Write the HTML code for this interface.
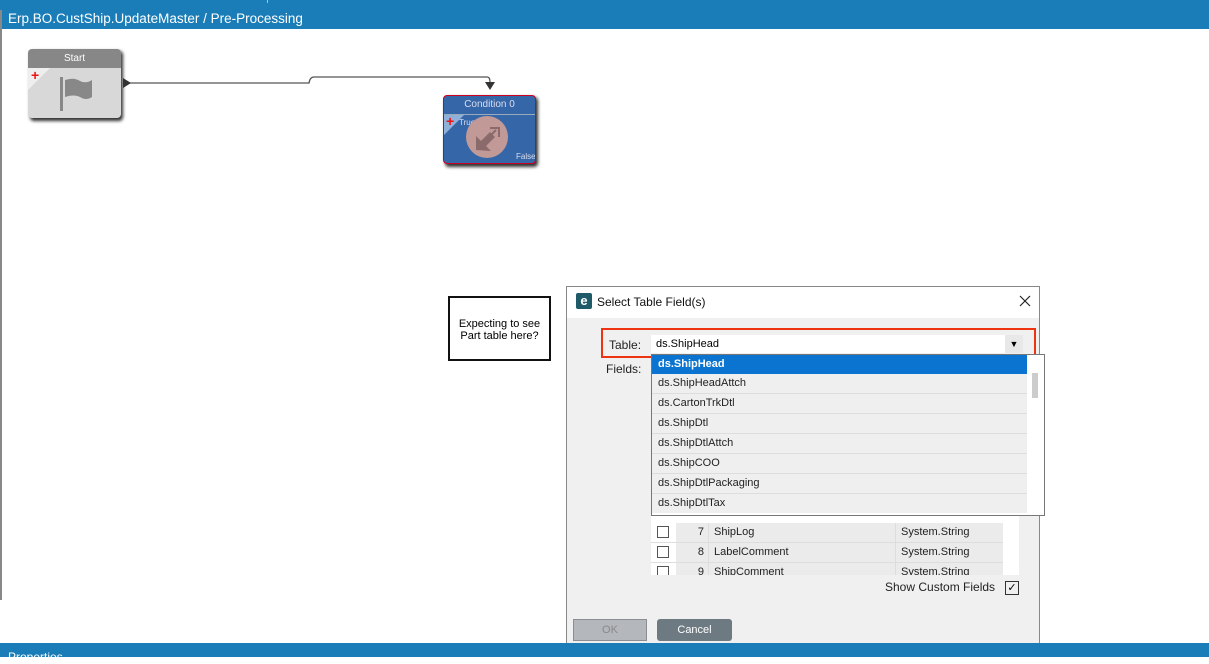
<!DOCTYPE html>
<html><head><style>
body{margin:0;width:1209px;height:657px;overflow:hidden;background:#fff;font-family:"Liberation Sans",sans-serif;position:relative}
.a{position:absolute}
.cb{display:inline-block;width:10px;height:10px;border:1px solid #555;margin:3px 6px}
</style></head><body>
<div class="a" style="left:0;top:0;width:1209px;height:29px;background:#1a7db8"></div>
<div class="a" style="left:267px;top:0;width:1px;height:3px;background:#9cc"></div>
<div class="a" style="left:0;top:10px;width:2px;height:590px;background:#888"></div>
<div class="a" style="left:8px;top:11px;color:#fff;font-size:13.5px">Erp.BO.CustShip.UpdateMaster / Pre-Processing</div>
<!-- Start node -->
<div class="a" style="left:30px;top:51px;width:93px;height:70px;background:#333;border-radius:4px;filter:blur(1.5px)"></div>
<div class="a" style="left:28px;top:49px;width:93px;height:69px;background:#d8d8d8;border-radius:4px;overflow:hidden">
<div style="height:19px;background:#878787;color:#fff;font-size:10px;text-align:center;line-height:19px">Start</div>
<div class="a" style="left:0;top:19px;width:0;height:0;border-top:22px solid #eee;border-right:22px solid transparent"></div>
<div class="a" style="left:3px;top:18px;color:#e11;font-size:14px;font-weight:bold">+</div>
<svg class="a" style="left:28px;top:26px" width="40" height="40"><rect x="4" y="2" width="3" height="34" fill="#888"/><path d="M9 5 Q18 2 24 6 Q30 9 36 5 V22 Q30 26 24 22 Q18 19 9 22Z" fill="#888"/></svg>
</div>
<svg class="a" style="left:120px;top:70px" width="380" height="30"><path d="M5 13 H189 Q190 7 194 7 H367 Q370 7 370 12" fill="none" stroke="#555" stroke-width="1.3"/><path d="M3 8 L11 13 L3 18Z" fill="#333"/><path d="M365 12 H375 L370 20Z" fill="#333"/></svg>
<!-- Condition -->
<div class="a" style="left:445px;top:97px;width:93px;height:70px;background:#333;border-radius:4px;filter:blur(1.5px)"></div>
<div class="a" style="left:443px;top:95px;width:93px;height:69px;background:#3566a8;border:1px solid #c02;border-radius:4px;box-sizing:border-box;overflow:hidden">
<div style="height:18px;border-bottom:1px solid #9ab;color:#dde;font-size:10px;text-align:center;line-height:18px">Condition 0</div>
<div class="a" style="left:0;top:19px;width:0;height:0;border-top:20px solid #8fb0d8;border-right:20px solid transparent"></div>
<div class="a" style="left:2px;top:17px;color:#e11;font-size:14px;font-weight:bold">+</div>
<div class="a" style="left:15px;top:22px;color:#dde;font-size:8px">True</div>
<div class="a" style="left:22px;top:20px;width:42px;height:42px;border-radius:50%;background:#c19a98"></div>
<svg class="a" style="left:24px;top:22px" width="40" height="40"><path d="M8 32 V18 L13 23 L22 14 L27 19 L18 28 L23 33Z" fill="#8a6a6a"/><path d="M20 20 L28 12 M22 10 H31 V19" fill="none" stroke="#8a6a6a" stroke-width="2"/></svg>
<div class="a" style="left:72px;top:56px;color:#dde;font-size:8px">False</div>
</div>
<!-- note -->
<div class="a" style="left:448px;top:296px;font-size:11px;text-align:center;line-height:12px;box-sizing:border-box;padding-top:20px;width:103px;height:65px;border:2px solid #111">Expecting to see<br>Part table here?</div>
<!-- dialog -->
<div class="a" style="left:566px;top:286px;width:474px;height:361px;border:1px solid #888;box-sizing:border-box;background:#f0f0f0">
<div style="height:31px;background:#fff;position:relative">
<div class="a" style="left:9px;top:6px;width:16px;height:16px;background:#1e5a68;border-radius:2px;color:#fff;font-size:13px;font-weight:bold;text-align:center;line-height:15px">e</div>
<div class="a" style="left:30px;top:8px;font-size:12px;color:#111">Select Table Field(s)</div>
<svg class="a" style="left:452px;top:8px" width="12" height="12"><path d="M1 1 L11 11 M11 1 L1 11" stroke="#222" stroke-width="1.2"/></svg>
</div>
</div>
<div class="a" style="left:601px;top:328px;width:435px;height:30px;border:2px solid #e31;box-sizing:border-box"></div>
<div class="a" style="left:609px;top:338px;font-size:12px;color:#222">Table:</div>
<div class="a" style="left:606px;top:362px;font-size:12px;color:#222">Fields:</div>
<div class="a" style="left:651px;top:335px;width:372px;height:18px;background:#fff"><span style="position:absolute;left:5px;top:3px;font-size:11px">ds.ShipHead</span><span style="position:absolute;right:0;top:0;width:18px;height:18px;background:#e8e8e8;font-size:9px;text-align:center;line-height:18px">▼</span></div>
<!-- grid -->
<div class="a" style="left:651px;top:504px;width:368px;height:71px;background:#fff;overflow:hidden;font-size:11px;color:#222">
<div style="position:absolute;top:19px;left:0;width:352px">
<div style="height:19px;display:flex;border-bottom:1px solid #ddd;background:#ebebeb"><div style="width:25px;background:#fff"><span class="cb"></span></div><div style="width:32px;text-align:right;padding-right:4px;line-height:19px;box-sizing:border-box">7</div><div style="width:187px;line-height:19px;padding-left:5px;box-sizing:border-box;border-left:1px solid #ddd">ShipLog</div><div style="width:108px;line-height:19px;padding-left:5px;box-sizing:border-box;border-left:1px solid #ddd">System.String</div></div>
<div style="height:19px;display:flex;border-bottom:1px solid #ddd;background:#ebebeb"><div style="width:25px;background:#fff"><span class="cb"></span></div><div style="width:32px;text-align:right;padding-right:4px;line-height:19px;box-sizing:border-box">8</div><div style="width:187px;line-height:19px;padding-left:5px;box-sizing:border-box;border-left:1px solid #ddd">LabelComment</div><div style="width:108px;line-height:19px;padding-left:5px;box-sizing:border-box;border-left:1px solid #ddd">System.String</div></div>
<div style="height:19px;display:flex;background:#ebebeb"><div style="width:25px;background:#fff"><span class="cb"></span></div><div style="width:32px;text-align:right;padding-right:4px;line-height:19px;box-sizing:border-box">9</div><div style="width:187px;line-height:19px;padding-left:5px;box-sizing:border-box;border-left:1px solid #ddd">ShipComment</div><div style="width:108px;line-height:19px;padding-left:5px;box-sizing:border-box;border-left:1px solid #ddd">System.String</div></div>
</div></div>
<div class="a" style="left:885px;top:580px;font-size:12px;color:#222">Show Custom Fields</div>
<div class="a" style="left:1005px;top:581px;width:12px;height:12px;border:1px solid #333;font-size:11px;line-height:12px;text-align:center">✓</div>
<div class="a" style="left:573px;top:619px;width:74px;height:22px;background:#b4b8bc;border:1px solid #8a8e92;box-sizing:border-box;color:#888;font-size:11px;text-align:center;line-height:20px">OK</div>
<div class="a" style="left:657px;top:619px;width:75px;height:22px;background:#6e7a82;border-radius:3px;color:#fff;font-size:11px;text-align:center;line-height:22px">Cancel</div>
<!-- dropdown list -->
<div class="a" style="left:651px;top:354px;width:394px;height:162px;background:#fff;border:1px solid #777;box-sizing:border-box;font-size:11px;color:#222">
<div style="width:375px">
<div style="height:19px;background:#0a74d0;color:#fff;font-weight:bold;line-height:19px;padding-left:6px">ds.ShipHead</div>
<div style="height:19px;background:#efefef;border-bottom:1px solid #ddd;line-height:19px;padding-left:6px">ds.ShipHeadAttch</div>
<div style="height:19px;background:#efefef;border-bottom:1px solid #ddd;line-height:19px;padding-left:6px">ds.CartonTrkDtl</div>
<div style="height:19px;background:#efefef;border-bottom:1px solid #ddd;line-height:19px;padding-left:6px">ds.ShipDtl</div>
<div style="height:19px;background:#efefef;border-bottom:1px solid #ddd;line-height:19px;padding-left:6px">ds.ShipDtlAttch</div>
<div style="height:19px;background:#efefef;border-bottom:1px solid #ddd;line-height:19px;padding-left:6px">ds.ShipCOO</div>
<div style="height:19px;background:#efefef;border-bottom:1px solid #ddd;line-height:19px;padding-left:6px">ds.ShipDtlPackaging</div>
<div style="height:19px;background:#efefef;line-height:19px;padding-left:6px">ds.ShipDtlTax</div>
</div>
<div class="a" style="left:380px;top:18px;width:6px;height:25px;background:#ccc"></div>
</div>
<div class="a" style="left:0;top:643px;width:1209px;height:14px;background:#1a7db8"></div>
<div class="a" style="left:8px;top:650px;color:#fff;font-size:12px">Properties</div>
</body></html>
